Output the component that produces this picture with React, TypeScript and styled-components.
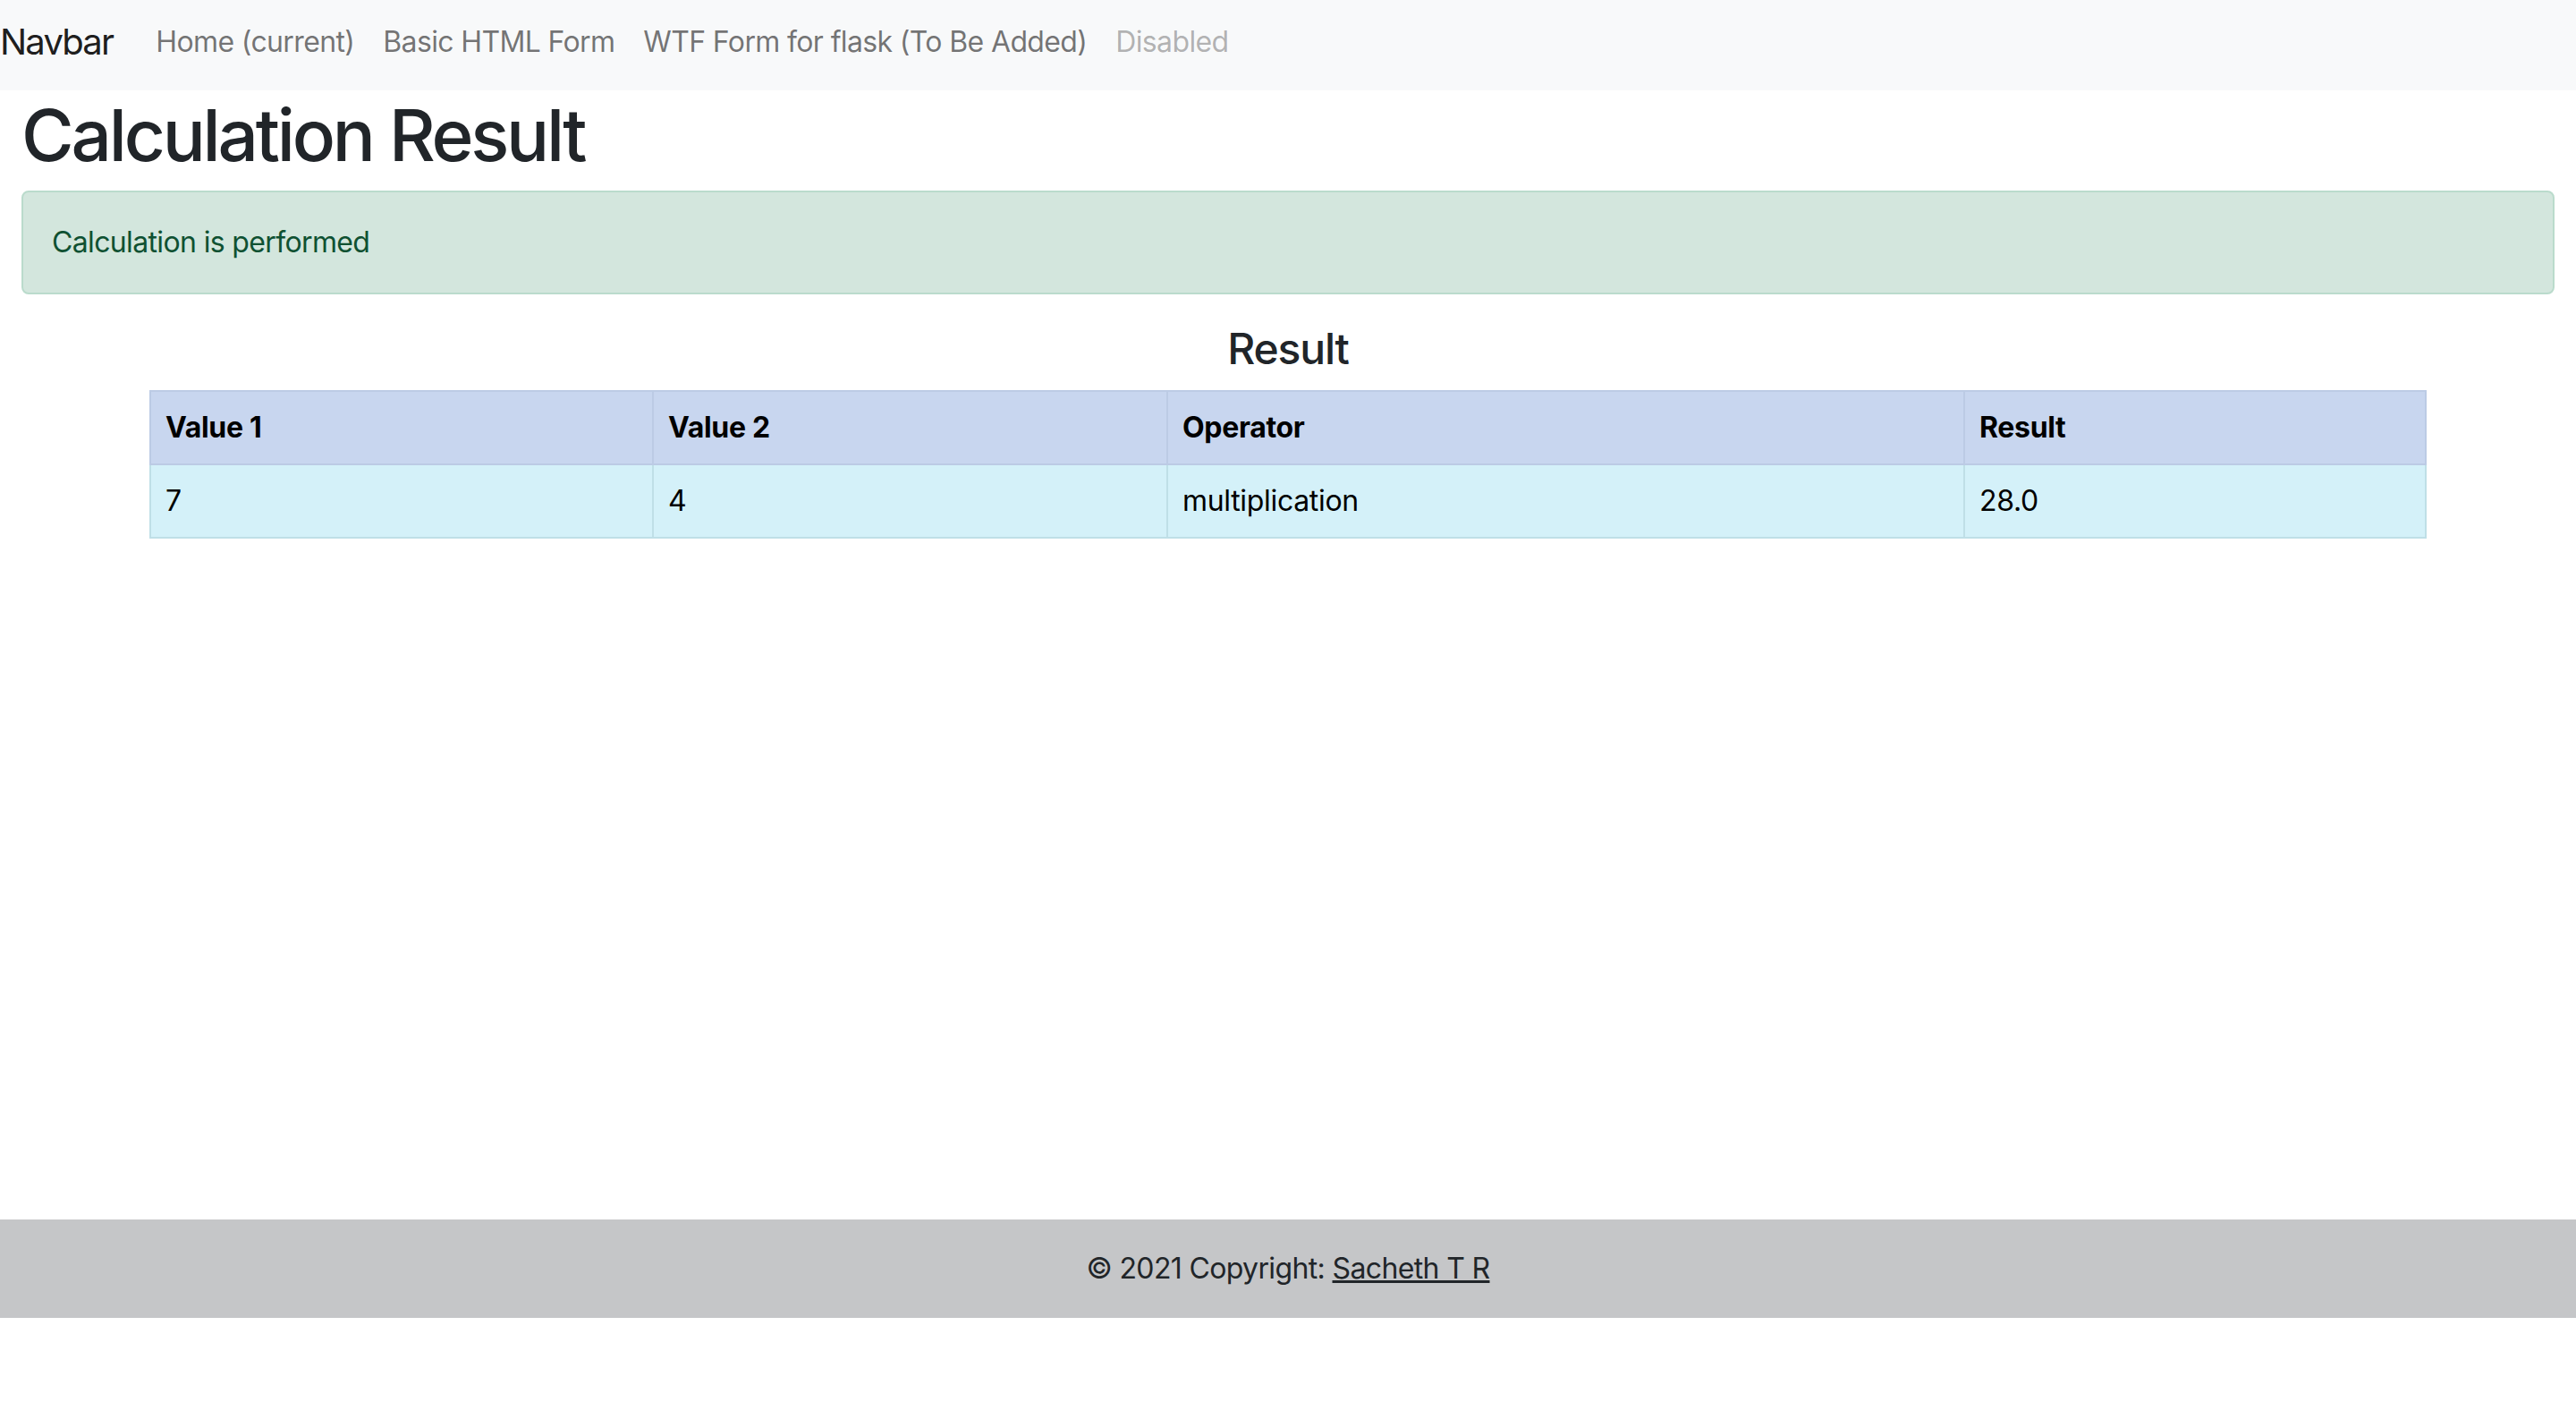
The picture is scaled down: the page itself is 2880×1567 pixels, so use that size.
import styled, { createGlobalStyle } from "styled-components"

const GlobalStyle = createGlobalStyle`
  html, body {
    margin: 0;
    padding: 0;
    background: #fff;
  }

  body {
    font-family: Inter, "Liberation Sans", sans-serif;
    font-size: 32px;
    line-height: 1.5;
    letter-spacing: -0.02em;
    color: #212529;
  }

  * {
    box-sizing: border-box;
  }
`

const Navbar = styled.nav`
  display: flex;
  align-items: center;
  height: 101px;
  padding-bottom: 8px;
  background-color: #f8f9fa;
`

const Brand = styled.a`
  margin-right: 32px;
  font-size: 40px;
  line-height: 60px;
  letter-spacing: -0.045em;
  color: rgba(0, 0, 0, 0.9);
  text-decoration: none;
`

const NavList = styled.ul`
  display: flex;
  margin: 0;
  padding: 0;
  list-style: none;
`

const NavLink = styled.a<{ $disabled?: boolean }>`
  display: block;
  padding: 0 16px;
  line-height: 48px;
  color: ${({ $disabled }) => ($disabled ? "rgba(0, 0, 0, 0.3)" : "rgba(0, 0, 0, 0.55)")};
  text-decoration: none;
`

const Main = styled.main`
  min-height: 1262px;
  padding: 2px 24px 0;
`

const Title = styled.h1`
  margin: 0 0 14px;
  font-size: 80px;
  font-weight: 500;
  line-height: 1.2;
  letter-spacing: -0.04em;
`

const Alert = styled.div`
  margin-bottom: 32px;
  padding: 32px;
  border: 2px solid #badbcc;
  border-radius: 8px;
  background-color: #d3e6dd;
  color: #0f5132;
`

const SectionTitle = styled.h4`
  margin: 0 0 17px;
  font-size: 48px;
  font-weight: 500;
  line-height: 1.2;
  text-align: center;
  letter-spacing: -0.025em;
`

const Table = styled.table`
  width: 2544px;
  margin: 0 auto;
  border-collapse: collapse;
  table-layout: fixed;
  letter-spacing: -0.01em;
  color: #000;
`

const HeadRow = styled.tr`
  background-color: #c8d6ef;

  th {
    border: 2px solid #bccbe5;
  }
`

const BodyRow = styled.tr`
  background-color: #d4f1f9;

  td {
    border: 2px solid #bfdfe7;
  }
`

const Cell = styled.td`
  padding: 16px;
  line-height: 48px;
  text-align: left;
`

const HeadCell = styled(Cell).attrs({ as: "th" })`
  font-weight: 700;
`

const Footer = styled.footer`
  padding: 31px 0;
  background-color: #c5c6c8;
  text-align: center;
  line-height: 48px;

  a {
    color: #212529;
    text-decoration: underline;
  }
`

const columns = [
  { label: "Value 1", width: 562 },
  { label: "Value 2", width: 575 },
  { label: "Operator", width: 891 },
  { label: "Result", width: 516 },
]

const row = ["7", "4", "multiplication", "28.0"]

const links = [
  { label: "Home (current)" },
  { label: "Basic HTML Form" },
  { label: "WTF Form for flask (To Be Added)" },
  { label: "Disabled", disabled: true },
]

const App = () => {
  return (
    <>
      <GlobalStyle />
      <Navbar>
        <Brand href="#">Navbar</Brand>
        <NavList>
          {links.map((link) => (
            <li key={link.label}>
              <NavLink href="#" $disabled={link.disabled}>
                {link.label}
              </NavLink>
            </li>
          ))}
        </NavList>
      </Navbar>
      <Main>
        <Title>Calculation Result</Title>
        <Alert>Calculation is performed</Alert>
        <SectionTitle>Result</SectionTitle>
        <Table>
          <colgroup>
            {columns.map((col) => (
              <col key={col.label} style={{ width: col.width }} />
            ))}
          </colgroup>
          <thead>
            <HeadRow>
              {columns.map((col) => (
                <HeadCell key={col.label}>{col.label}</HeadCell>
              ))}
            </HeadRow>
          </thead>
          <tbody>
            <BodyRow>
              {row.map((value, i) => (
                <Cell key={i}>{value}</Cell>
              ))}
            </BodyRow>
          </tbody>
        </Table>
      </Main>
      <Footer>
        © 2021 Copyright: <a href="#">Sacheth T R</a>
      </Footer>
    </>
  )
}

export default App
